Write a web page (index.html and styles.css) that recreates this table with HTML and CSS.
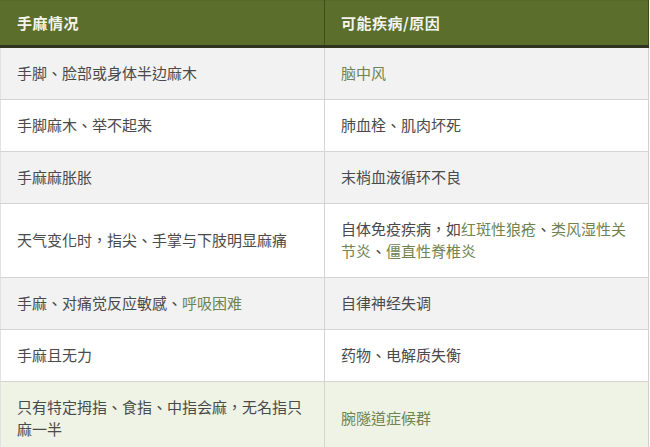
FILE: index.html
```html
<!DOCTYPE html>
<html lang="zh-Hant">
<head>
<meta charset="utf-8">
<link rel="stylesheet" href="styles.css">
</head>
<body>
<table class="sym-table">
  <thead>
    <tr><th>手麻情况</th><th>可能疾病/原因</th></tr>
  </thead>
  <tbody>
    <tr class="alt"><td>手脚、脸部或身体半边麻木</td><td><span class="link">脑中风</span></td></tr>
    <tr><td>手脚麻木、举不起来</td><td>肺血栓、肌肉坏死</td></tr>
    <tr class="alt"><td>手麻麻胀胀</td><td>末梢血液循环不良</td></tr>
    <tr><td>天气变化时，指尖、手掌与下肢明显麻痛</td><td>自体免疫疾病，如<span class="link">红斑性狼疮</span>、<span class="link">类风湿性关节炎</span>、<span class="link">僵直性脊椎炎</span></td></tr>
    <tr class="alt"><td>手麻、对痛觉反应敏感、<span class="link">呼吸困难</span></td><td>自律神经失调</td></tr>
    <tr><td>手麻且无力</td><td>药物、电解质失衡</td></tr>
    <tr class="hl"><td>只有特定拇指、食指、中指会麻，无名指只麻一半</td><td><span class="link">腕隧道症候群</span></td></tr>
  </tbody>
</table>
</body>
</html>
```

FILE: styles.css
```css
html, body {
  margin: 0;
  padding: 0;
  background: #ffffff;
}
body {
  font-family: "Noto Sans CJK TC", "Noto Sans CJK SC", "Noto Sans", sans-serif;
  font-size: 15px;
  color: #4a4a4a;
}
.sym-table {
  width: 649px;
  border-collapse: collapse;
  table-layout: fixed;
}
.sym-table th,
.sym-table td {
  width: 50%;
  text-align: left;
  vertical-align: middle;
  line-height: 22px;
  padding: 14px 16px 15px;
  border: 1px solid #d4d4d4;
}
.sym-table th {
  background: #5b6e2c;
  color: #f4f4ee;
  font-weight: bold;
  padding: 11px 16px;
  border-color: #56692a;
  border-right-color: #3f4d1d;
  border-bottom: 3px solid #2f3320;
  letter-spacing: 0.5px;
}
.sym-table th:first-child { border-left-color: #5b6e2c; }
.sym-table tbody tr { background: #ffffff; }
.sym-table tbody tr.alt { background: #f2f2f2; }
.sym-table tbody tr.hl { background: #eef3e5; }
.sym-table td:first-child { border-left-color: #e2e2e2; }
.sym-table td:last-child { border-right-color: #cfcfcf; }
.link { color: #6f8450; }
```
